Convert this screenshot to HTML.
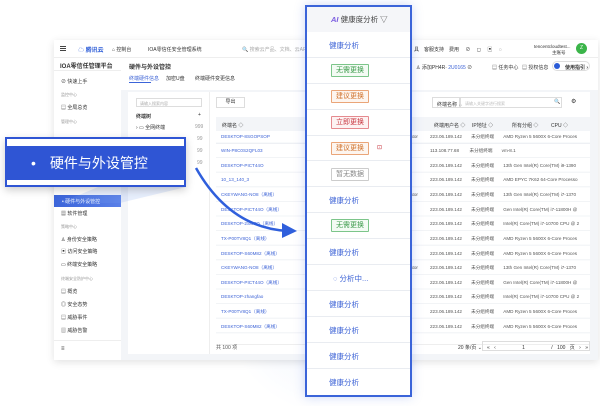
<!DOCTYPE html>
<html><head><meta charset="utf-8"><style>
*{margin:0;padding:0;box-sizing:border-box}
body{width:600px;height:406px;background:#fff;position:relative;overflow:hidden;font-family:"Liberation Sans","Noto Sans CJK SC",sans-serif;color:#333;font-size:5px}
.a{position:absolute;white-space:nowrap}
.win{left:54px;top:40px;width:544px;height:320px;background:#f3f5f8;box-shadow:0 2px 8px rgba(0,0,0,.12)}
.lk{color:#3d63d6}
.row{position:absolute;left:216px;width:374px;height:14.6px;border-bottom:1px solid #eef0f4}
.ov{left:305px;top:5px;width:107px;height:392px;border:2px solid #3b64d9;background:#fff;box-shadow:0 0 10px rgba(60,100,220,.25)}
.orow{position:absolute;left:0;width:103px;height:25.9px;border-bottom:1px solid #e9ecf1;font-size:7.5px}
.orow span{position:absolute;left:22px;top:8px}
.tag{position:absolute;left:24px;top:6px;border:1px solid;border-radius:1px;padding:1px 4px;font-size:7px;line-height:9px}
.g{color:#3b9a4a;border-color:#7cc58a;background:#f3fbf4}
.o{color:#d0722b;border-color:#eaa578;background:#fdf5ef}
.r{color:#c8353f;border-color:#e58a8f;background:#fdf2f2}
.n{color:#888;border-color:#ccc;background:#fff}
.sb div{position:absolute;left:0;white-space:nowrap}
</style></head><body>
<!-- glows -->
<div class="a" style="left:180px;top:0;width:140px;height:406px;background:radial-gradient(ellipse at 100% 55%,rgba(90,140,240,.18),rgba(255,255,255,0) 60%)"></div>
<div class="win a">
 <!-- header -->
 <div class="a" style="left:0;top:0;width:544px;height:18px;background:#fff;border-bottom:1px solid #eee"></div>
 <div class="a" style="left:6px;top:6px;width:6px;height:5px;border-top:1px solid #444;border-bottom:1px solid #444"></div>
 <div class="a" style="left:6px;top:8px;width:6px;height:1px;background:#444"></div>
 <div class="a" style="left:24px;top:5px;font-size:6px;color:#2a5bd7;font-weight:bold">☁ 腾讯云</div>
 <div class="a" style="left:58px;top:6px">⌂ 控制台</div>
 <div class="a" style="left:94px;top:6px">IOA零信任安全管理系统</div>
 <div class="a" style="left:188px;top:6px;color:#aaa">🔍 搜索云产品、文档、云API...</div>
 <div class="a" style="left:360px;top:6px">具　客服支持　费用　 ⊘　 ◻　 ▣　 ◌</div>
 <div class="a" style="left:480px;top:4px;font-size:4.5px">tencentcloudtest...</div>
 <div class="a" style="left:498px;top:10px;font-size:4.5px">主账号</div>
 <div class="a" style="left:522px;top:3px;width:11px;height:11px;border-radius:50%;background:#3bb54a;color:#fff;font-size:5px;text-align:center;line-height:11px">Z</div>
 <!-- sidebar -->
 <div class="a sb" style="left:0;top:18px;width:67px;height:302px;background:#fff">
  <div style="left:6px;top:3px;font-size:6px;font-weight:bold">IOA零信任管理平台</div>
  <div style="left:0;top:12px;width:67px;height:1px;background:#eee"></div>
  <div style="left:7px;top:20px">⊘ 快速上手</div>
  <div style="left:7px;top:34px;color:#999;font-size:4px">监控中心</div>
  <div style="left:7px;top:46px">▤ 全局总览</div>
  <div style="left:7px;top:61px;color:#999;font-size:4px">管理中心</div>
  <div style="left:0;top:137px;width:67px;height:12px;background:linear-gradient(90deg,#3b64d9,#5a80e8);color:#fff;padding:3px 0 0 8px">• 硬件与外设管控</div>
  <div style="left:7px;top:152px">▦ 软件管理</div>
  <div style="left:7px;top:166px;color:#999;font-size:4px">策略中心</div>
  <div style="left:7px;top:178px">♙ 身份安全策略</div>
  <div style="left:7px;top:190px">▣ 访问安全策略</div>
  <div style="left:7px;top:203px">▭ 终端安全策略</div>
  <div style="left:7px;top:218px;color:#999;font-size:4px">终端安全防护中心</div>
  <div style="left:7px;top:230px">▤ 概览</div>
  <div style="left:7px;top:243px">◎ 安全态势</div>
  <div style="left:7px;top:256px">▤ 威胁事件</div>
  <div style="left:7px;top:269px">▥ 威胁告警</div>
  <div style="left:0;top:282px;width:67px;height:1px;background:#eee"></div>
  <div style="left:7px;top:288px;font-size:6px">≡</div>
 </div>
 <!-- content header -->
 <div class="a" style="left:67px;top:18px;width:477px;height:32px;background:#fff"></div>
 <div class="a" style="left:75px;top:22px;font-size:6px;font-weight:bold">硬件与外设管控</div>
 <div class="a lk" style="left:75px;top:35px">终端硬件信息</div>
 <div class="a" style="left:75px;top:42px;width:22px;height:1px;background:#3b64d9"></div>
 <div class="a" style="left:112px;top:35px">加密U盘</div>
 <div class="a" style="left:141px;top:35px">终端硬件变更信息</div>
 <div class="a" style="left:362px;top:24px">♙ 添加PH4R· <span class="lk">2U0165</span> ⊘</div>
 <div class="a" style="left:438px;top:24px">▤ 任务中心</div>
 <div class="a" style="left:468px;top:24px">▤ 授权信息</div>
 <div class="a" style="left:498px;top:21px;width:38px;height:10px;border:1px solid #ddd;border-radius:5px;padding:2px 0 0 12px;font-weight:bold">使用指引 ›</div>
 <div class="a" style="left:500px;top:23px;width:6px;height:6px;border-radius:50%;background:#2a5bd7"></div>
 <!-- panel -->
 <div class="a" style="left:74px;top:52px;width:462px;height:262px;background:#fff"></div>
 <div class="a" style="left:155px;top:52px;width:1px;height:262px;background:#eee"></div>
 <div class="a" style="left:82px;top:58px;width:66px;height:9px;border:1px solid #ddd;color:#aaa;padding:2px 0 0 3px;font-size:4px">请输入搜索内容</div>
 <div class="a" style="left:82px;top:73px;font-weight:bold">终端树</div><div class="a" style="left:144px;top:72px">+</div>
 <div class="a" style="left:82px;top:84px">› ▭ 全网终端</div><div class="a" style="left:141px;top:84px;color:#999">999</div>
 <div class="a" style="left:143px;top:96px;color:#999">99</div>
 <div class="a" style="left:143px;top:108px;color:#999">99</div>
 <div class="a" style="left:143px;top:120px;color:#999">99</div>
 <div class="a" style="left:162px;top:57px;width:29px;height:11px;border:1px solid #ddd;text-align:center;line-height:9px">导出</div>
 <div class="a" style="left:378px;top:57px;width:28px;height:11px;border:1px solid #ddd;padding:3px 0 0 4px">终端名称 ⌄</div>
 <div class="a" style="left:406px;top:57px;width:102px;height:11px;border:1px solid #ddd;padding:3px 0 0 4px;color:#bbb;font-size:4px">请输入关键字进行搜索</div>
 <div class="a" style="left:500px;top:59px">🔍</div><div class="a" style="left:517px;top:58px;font-size:6px">⚙</div>
 <div class="a" style="left:162px;top:77px;width:374px;height:14px;background:#f3f5f8"></div>
 <div class="a" style="left:168px;top:82px">终端名 ◇</div>
 <div class="a" style="left:380px;top:82px">终端用户名 ◇</div><div class="a" style="left:418px;top:82px">IP地址 ◇</div><div class="a" style="left:458px;top:82px">所有分组 ◇</div><div class="a" style="left:497px;top:82px">CPU ◇</div>
 <div class="a" style="left:162px;top:304px;width:374px;height:1px;background:#eee"></div>
 <div class="a" style="left:162px;top:304px;color:#555">共 100 项</div>
 <div class="a" style="left:404px;top:304px">20 条/页 ⌄</div>
 <div class="a" style="left:428px;top:301px;width:108px;height:10px;border:1px solid #ddd;padding:2px 0 0 4px;word-spacing:3px">« ‹ &nbsp;&nbsp;&nbsp;&nbsp; 1 &nbsp;&nbsp;&nbsp;&nbsp; / 100 页 › »</div>
</div>
<!-- table rows absolute page coords -->
<div id="rows"></div>
<div class="a" style="left:0;top:0">
<div class="row" style="top:129px"></div>
</div>
<div style="position:absolute;left:0;top:0;font-size:4.6px;color:#555">
<div class="a lk" style="left:221px;top:134px">DESKTOP-8SGOPSOP</div>
<div class="a lk" style="left:221px;top:148px">WIN-P8C0S2QFL03</div>
<div class="a lk" style="left:221px;top:163px">DESKTOP-PICT44O</div>
<div class="a lk" style="left:221px;top:177px">10_13_140_3</div>
<div class="a lk" style="left:221px;top:192px">CKEYWANG-NO8（离线）</div>
<div class="a lk" style="left:221px;top:207px">DESKTOP-PICT44O（离线）</div>
<div class="a lk" style="left:221px;top:221px">DESKTOP-2SG8Q（离线）</div>
<div class="a lk" style="left:221px;top:236px">TX-P00TV8Q1（离线）</div>
<div class="a lk" style="left:221px;top:251px">DESKTOP-S60M82（离线）</div>
<div class="a lk" style="left:221px;top:265px">CKEYWANG-NO8（离线）</div>
<div class="a lk" style="left:221px;top:280px">DESKTOP-PICT44O（离线）</div>
<div class="a lk" style="left:221px;top:294px">DESKTOP-zhangfao</div>
<div class="a lk" style="left:221px;top:309px">TX-P00TV8Q1（离线）</div>
<div class="a lk" style="left:221px;top:324px">DESKTOP-S60M82（离线）</div>
<div class="a" style="left:410px;top:134px">ator</div>
<div class="a" style="left:410px;top:192px">ator</div>
<div class="a" style="left:410px;top:265px">ator</div>
</div>
<div style="position:absolute;left:0;top:0;font-size:4.6px;color:#555">
<div class="a" style="left:430px;top:134px">223.06.189.142　　未分组终端　　AMD Ryzen 5 5600X 6-Core Proces</div>
<div class="a" style="left:430px;top:148px">113.108.77.68　　 未分组终端　　vm-8.1</div>
<div class="a" style="left:430px;top:163px">223.06.189.142　　未分组终端　　13th Gen Intel(R) Core(TM) i9-1390</div>
<div class="a" style="left:430px;top:177px">223.06.189.142　　未分组终端　　AMD EPYC 7K62 64-Core Processo</div>
<div class="a" style="left:430px;top:192px">223.06.189.142　　未分组终端　　13th Gen Intel(R) Core(TM) i7-1370</div>
<div class="a" style="left:430px;top:207px">223.06.189.142　　未分组终端　　Gen Intel(R) Core(TM) i7-11800H @</div>
<div class="a" style="left:430px;top:221px">223.06.189.142　　未分组终端　　Intel(R) Core(TM) i7-10700 CPU @ 2</div>
<div class="a" style="left:430px;top:236px">223.06.189.142　　未分组终端　　AMD Ryzen 5 5600X 6-Core Proces</div>
<div class="a" style="left:430px;top:251px">223.06.189.142　　未分组终端　　AMD Ryzen 5 5600X 6-Core Proces</div>
<div class="a" style="left:430px;top:265px">223.06.189.142　　未分组终端　　13th Gen Intel(R) Core(TM) i7-1370</div>
<div class="a" style="left:430px;top:280px">223.06.189.142　　未分组终端　　Gen Intel(R) Core(TM) i7-11800H @</div>
<div class="a" style="left:430px;top:294px">223.06.189.142　　未分组终端　　Intel(R) Core(TM) i7-10700 CPU @ 2</div>
<div class="a" style="left:430px;top:309px">223.06.189.142　　未分组终端　　AMD Ryzen 5 5600X 6-Core Proces</div>
<div class="a" style="left:430px;top:324px">223.06.189.142　　未分组终端　　AMD Ryzen 5 5600X 6-Core Proces</div>
</div>
<svg class="a" style="left:0;top:0" width="600" height="406">
<g stroke="#eef0f4" stroke-width="0.8">
<line x1="216" y1="143" x2="590" y2="143"/><line x1="216" y1="157.6" x2="590" y2="157.6"/><line x1="216" y1="172.2" x2="590" y2="172.2"/><line x1="216" y1="186.8" x2="590" y2="186.8"/><line x1="216" y1="201.4" x2="590" y2="201.4"/><line x1="216" y1="216" x2="590" y2="216"/><line x1="216" y1="230.6" x2="590" y2="230.6"/><line x1="216" y1="245.2" x2="590" y2="245.2"/><line x1="216" y1="259.8" x2="590" y2="259.8"/><line x1="216" y1="274.4" x2="590" y2="274.4"/><line x1="216" y1="289" x2="590" y2="289"/><line x1="216" y1="303.6" x2="590" y2="303.6"/><line x1="216" y1="318.2" x2="590" y2="318.2"/><line x1="216" y1="332.8" x2="590" y2="332.8"/>
</g>
<polygon points="186,150 186,187 120,203 60,203" fill="rgba(120,160,240,.18)"/>
<path d="M196 168 Q230 228 288 231" fill="none" stroke="#2f5fdc" stroke-width="2.5"/>
<polygon points="282,223 297,231 282,238" fill="#2f5fdc"/>
</svg>
<!-- callout -->
<div class="a" style="left:5px;top:137px;width:181px;height:50px;background:#2f55d4;box-shadow:0 3px 8px rgba(0,0,0,.2)">
 <div class="a" style="left:2px;top:2px;width:177px;height:7px;background:#fff"></div>
 <div class="a" style="left:2px;top:43px;width:177px;height:5px;background:#fff"></div>
 <div class="a" style="left:26px;top:16px;color:#fff;font-size:14px">•　硬件与外设管控</div>
</div>
<!-- overlay -->
<div class="a ov">
 <div class="a" style="left:0;top:0;width:103px;height:25px;background:#f5f6f9;font-size:7.5px;padding:7px 0 0 24px;color:#444"><span style="color:#7a5ce0;font-style:italic;font-weight:bold">AI</span> 健康度分析 ▽</div>
 <div class="orow lk" style="top:25px"><span>健康分析</span></div>
 <div class="orow" style="top:50.9px"><div class="tag g">无需更换</div></div>
 <div class="orow" style="top:76.8px"><div class="tag o">建议更换</div></div>
 <div class="orow" style="top:102.7px"><div class="tag r">立即更换</div></div>
 <div class="orow" style="top:128.6px"><div class="tag o">建议更换</div><span style="left:70px;color:#c8353f;font-size:6px">⊡</span></div>
 <div class="orow" style="top:154.5px"><div class="tag n">暂无数据</div></div>
 <div class="orow lk" style="top:180.4px"><span>健康分析</span></div>
 <div class="orow" style="top:206.3px"><div class="tag g">无需更换</div></div>
 <div class="orow lk" style="top:232.2px"><span>健康分析</span></div>
 <div class="orow lk" style="top:258.1px"><span style="left:26px">◌ 分析中...</span></div>
 <div class="orow lk" style="top:284px"><span>健康分析</span></div>
 <div class="orow lk" style="top:309.9px"><span>健康分析</span></div>
 <div class="orow lk" style="top:335.8px"><span>健康分析</span></div>
 <div class="orow lk" style="top:361.7px;border:none"><span>健康分析</span></div>
</div>
</body></html>
